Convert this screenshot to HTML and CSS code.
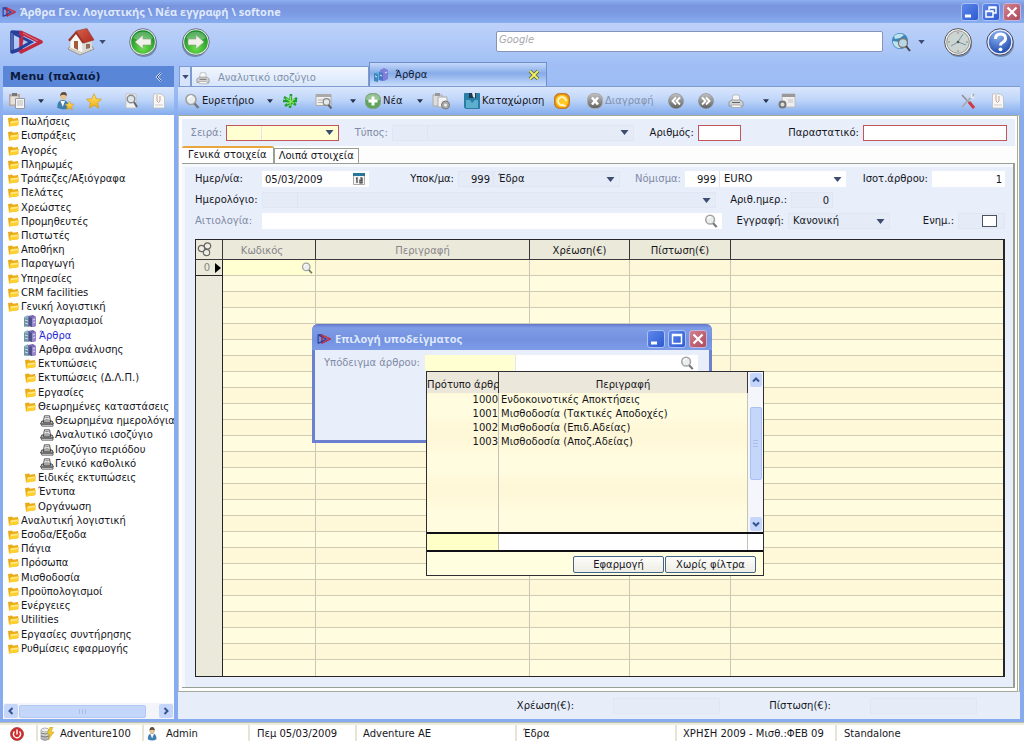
FILE: index.html
```html
<!DOCTYPE html>
<html lang="el">
<head>
<meta charset="utf-8">
<title>Άρθρα Γεν. Λογιστικής</title>
<link rel="stylesheet" href="styles.css">
</head>
<body>
<svg class="defs" aria-hidden="true">
  <defs>
    <linearGradient id="gold" x1="0" y1="0" x2="0" y2="1"><stop offset="0" stop-color="#ffe873"/><stop offset="1" stop-color="#f2ab12"/></linearGradient>
    <linearGradient id="silver" x1="0" y1="0" x2="0" y2="1"><stop offset="0" stop-color="#fafafa"/><stop offset="1" stop-color="#a5a8aa"/></linearGradient>
    <linearGradient id="dark" x1="0" y1="0" x2="0" y2="1"><stop offset="0" stop-color="#c2c2c2"/><stop offset="1" stop-color="#606060"/></linearGradient>
    <linearGradient id="roof" x1="0" y1="0" x2="1" y2="1"><stop offset="0" stop-color="#d9614c"/><stop offset="1" stop-color="#ad2a1e"/></linearGradient>
    <radialGradient id="green" cx=".5" cy=".75" r=".7"><stop offset="0" stop-color="#6fe04c"/><stop offset="1" stop-color="#128a24"/></radialGradient>
    <radialGradient id="blue" cx=".4" cy=".2" r=".9"><stop offset="0" stop-color="#8fb4f2"/><stop offset="1" stop-color="#1742a8"/></radialGradient>
  </defs>
  <symbol id="logo" viewBox="0 0 34 24"><path d="M12 2.500L3 2v20l9-3" fill="none" stroke="#26409c" stroke-width="3.600" stroke-linejoin="round"/><path d="M12 2.500v19.500L32 12z" fill="none" stroke="#c2283e" stroke-width="3.600" stroke-linejoin="round"/><path d="M4 3l18 9-12 7" fill="none" stroke="#26409c" stroke-width="3"/><path d="M13 12V3l16 8" fill="none" stroke="#c2283e" stroke-width="2.600"/><path d="M3 3v17M14 3l15 8" stroke="#fff" stroke-opacity=".4" fill="none"/></symbol>
  <symbol id="home" viewBox="0 0 28 28"><path d="M1 21l12 6 14-6-2-3H3z" fill="#d9d6cf" stroke="#8d8577" stroke-width=".8"/><path d="M3 12l6-7 7 9v11L3 20z" fill="#f7f7f5" stroke="#b9b4ac" stroke-width=".6"/><path d="M16 13h9v8l-9 4z" fill="#d9d9d6"/><path d="M9 3L20 .500l7 11.500-10 3z" fill="url(#roof)" stroke="#8c2c22" stroke-width=".5"/><path d="M9 3L1 12l2 1.500L9 6l6.500 9.500 2-.5z" fill="#9c3328"/><path d="M7 13h4v9l-4-2z" fill="#a65a3c"/><path d="M19 16h4v4l-4 1z" fill="#8f6d58"/></symbol>
  <symbol id="back" viewBox="0 0 30 30"><circle cx="16" cy="17" r="13" fill="#345" opacity=".45"/><circle cx="15" cy="15" r="13.3" fill="#e8f0e8" stroke="#557" stroke-width=".8"/><circle cx="15" cy="15" r="11.800" fill="url(#green)"/><path d="M5 11a11 11 0 0120 0q-10 6-20 0" fill="#fff" opacity=".28"/><path d="M7 15l8-7v4h8v6h-8v4z" fill="#f1f1ec" stroke="#8b9d85" stroke-width=".6"/></symbol>
  <symbol id="clock" viewBox="0 0 30 30"><circle cx="16" cy="17" r="13" fill="#345" opacity=".45"/><circle cx="15" cy="15" r="13.4" fill="#f5f5f5" stroke="#555"/><circle cx="15" cy="15" r="11.300" fill="#cdd5d2" stroke="#999"/><path d="M15 15l5-8M15 15l8 3M15 15l-7 4" stroke="#6f97a5" stroke-width="1"/><circle cx="15" cy="15" r="1.300" fill="#555"/><path d="M15 5v2M15 23v2M5 15h2M23 15h2" stroke="#888"/></symbol>
  <symbol id="help" viewBox="0 0 30 30"><circle cx="16" cy="17" r="13" fill="#345" opacity=".45"/><circle cx="15" cy="15" r="13.2" fill="#eaf0fb" stroke="#446"/><circle cx="15" cy="15" r="11.2" fill="url(#blue)"/><path d="M10.500 12q0-5 5-5t5 4.500q0 2.500-3 4-2 1-2 3" fill="none" stroke="#fff" stroke-width="3"/><circle cx="15.500" cy="22.300" r="1.900" fill="#fff"/></symbol>
  <symbol id="globe" viewBox="0 0 20 20"><circle cx="9" cy="9" r="8" fill="#3c87b8"/><path d="M3 4q5-4 10-1L9 6 4 7zM2 9l6 1 2 6q-6 1-8-5" fill="#bfe3ee"/><circle cx="12" cy="11" r="4.500" fill="#dbe9ee" fill-opacity=".8" stroke="#777" stroke-width="1.300"/><path d="M15 14l4 5" stroke="#444" stroke-width="2"/></symbol>
  <symbol id="search" viewBox="0 0 16 16"><circle cx="7" cy="6.500" r="5" fill="#e9edee" stroke="#a3a3a3" stroke-width="1.700"/><path d="M4 6q1-3 4-3" stroke="#fff" fill="none" stroke-width="1.500"/><path d="M10.500 10.500l4 4.500" stroke="#777" stroke-width="2.400"/></symbol>
  <symbol id="paste" viewBox="0 0 18 18"><path d="M1 2h11v12H1z" fill="#b8a79c"/><path d="M4 1h5v3H4z" fill="#777"/><path d="M2.500 4.500h8v8h-8z" fill="#e6e1dd"/><path d="M7.500 6.500h9v10h-9z" fill="#f6f6f6" stroke="#999"/><path d="M9 9h6M9 11h6M9 13h6" stroke="#b9b9b9"/></symbol>
  <symbol id="person" viewBox="0 0 16 16"><path d="M2 14q0-7 5-7t5 7q-5 3-10 0" fill="#3e7fb0"/><path d="M5 8l2 5 2-5z" fill="#fff"/><circle cx="7" cy="4.500" r="3" fill="#e3c49c"/><path d="M4 4q0-4 3-4t3 4q-3-2-6 0" fill="#5e4a38"/></symbol>
  <symbol id="personstar" viewBox="0 0 16 16"><path d="M1 14q0-7 5-7t6 7q-5 3-11 0" fill="#3e7fb0"/><path d="M4 8l2 5 2-5z" fill="#fff"/><circle cx="6.500" cy="4" r="3" fill="#e3c49c"/><path d="M3.500 3.500Q4 0 7 0t2.500 3.500q-3-2-6 0" fill="#5e4a38"/><path d="M12 8l1.200 2.600 2.800.3-2 2 .5 2.800-2.500-1.300-2.500 1.300.5-2.800-2-2 2.800-.3z" fill="url(#gold)" stroke="#c9962a" stroke-width=".5"/></symbol>
  <symbol id="star" viewBox="0 0 16 16"><path d="M8 .8l2.200 4.900 5.300.6-4 3.500 1.200 5.300L8 12.300l-4.700 2.800 1.200-5.300-4-3.500 5.300-.6z" fill="url(#gold)" stroke="#d29a19" stroke-width=".7"/></symbol>
  <symbol id="sparkle" viewBox="0 0 16 16"><path d="M9 1L8 15M2 4l12 8M15 5L3 13M1 8h14" stroke="#1f9f2d" stroke-width="2.600"/><path d="M8.800 3L8 13M4 5.500l8 5M13 6l-8 5" stroke="#8fe85f" stroke-width="1.200"/></symbol>
  <symbol id="docsearch" viewBox="0 0 16 16"><path d="M3 1h10v14H3z" fill="#f3f3f3" stroke="#bbb" stroke-width=".8"/><circle cx="8" cy="6" r="3.800" fill="#dfe6ea" stroke="#8c8c8c" stroke-width="1.400"/><path d="M11 9l3 5" stroke="#666" stroke-width="2"/></symbol>
  <symbol id="clip" viewBox="0 0 16 16"><path d="M2.500 1h8l3 3v11h-11z" fill="#f8f8f6" stroke="#bbb" stroke-width=".8"/><path d="M6 2v6q1.500 3 3 0V3" fill="none" stroke="#c9a097"/><path d="M4 12h8" stroke="#ccc"/></symbol>
  <symbol id="listfind" viewBox="0 0 18 16"><path d="M1 1.500h15v11H1z" fill="#eee" stroke="#aaa"/><path d="M1 2h15v2H1z" fill="#aaa"/><path d="M3 7h7M3 9.500h5" stroke="#b5b5b5"/><circle cx="11.500" cy="9" r="3.300" fill="#e5e9ea" stroke="#888" stroke-width="1.200"/><path d="M13.500 12l3 3.500" stroke="#666" stroke-width="2"/></symbol>
  <symbol id="add" viewBox="0 0 16 16"><rect x=".5" y=".5" width="15" height="15" rx="6" fill="#5fa45c" stroke="#86a184"/><path d="M1 7q0-6 7-6t7 6z" fill="#fff" opacity=".35"/><path d="M8 3.500v9M3.500 8h9" stroke="#fff" stroke-width="3"/></symbol>
  <symbol id="copy" viewBox="0 0 18 18"><path d="M1 3h9v11H1z" fill="#ddd" stroke="#aaa"/><path d="M3 1h5v3H3z" fill="#999"/><path d="M6 5h9v10H6z" fill="#f4f4f4" stroke="#aaa"/><circle cx="13.500" cy="13" r="4" fill="#aaa" stroke="#777"/><circle cx="13.500" cy="13" r="1.500" fill="#eee"/></symbol>
  <symbol id="save" viewBox="0 0 16 16"><path d="M.5.500h15v15H1.500l-1-1z" fill="#287fa8" stroke="#2d7ba3"/><path d="M5 0h7v5H5z" fill="#1a3a52"/><path d="M8 0h3v5L9 4z" fill="#e5e5e5"/><path d="M2 7h12v8H2z" fill="#5eaed0"/><path d="M6 7l2 3 3-3z" fill="#287fa8"/></symbol>
  <symbol id="refresh" viewBox="0 0 16 16"><rect x=".5" y=".5" width="15" height="15" rx="5" fill="#ee8d12" stroke="#b57b32"/><circle cx="8" cy="8" r="6.300" fill="#ffc928"/><path d="M12 8a4 4 0 10-2 3.500M8 12l4 1" fill="none" stroke="#fff6c8" stroke-width="1.800"/></symbol>
  <symbol id="delete" viewBox="0 0 16 16"><rect x=".5" y=".5" width="15" height="15" rx="6" fill="url(#dark)" stroke="#aaa"/><path d="M5 4.500l6 7M11 4.500l-6 7" stroke="#fff" stroke-width="2.600"/></symbol>
  <symbol id="prev" viewBox="0 0 16 16"><circle cx="8" cy="8" r="7.500" fill="url(#dark)" stroke="#888" stroke-width=".6"/><path d="M8 4.500L4.500 8 8 11.500M12 4.500L8.500 8l3.500 3.500" fill="none" stroke="#fff" stroke-width="1.900"/></symbol>
  <symbol id="printer" viewBox="0 0 16 16"><path d="M5 2h6l1 6H4z" fill="#f8f8f8" stroke="#aaa" stroke-width=".7"/><path d="M1 9l3-2h8l3 2v4H1z" fill="#d5d5d5" stroke="#8a8a8a" stroke-width=".8"/><path d="M4 9.500h8" stroke="#666"/><path d="M3 12h9l2 2.500H4z" fill="#f8f8f8" stroke="#999" stroke-width=".7"/></symbol>
  <symbol id="printerdark" viewBox="0 0 16 14"><path d="M5 1h6l1 6H4z" fill="#fff" stroke="#333"/><path d="M6 3h4M6 5h4" stroke="#777"/><path d="M4 7H2L.5 10.500h15L14 7h-2v2H4z" fill="#bbb" stroke="#333"/><path d="M1 11h14v2H2z" fill="#e8e8e8" stroke="#555"/></symbol>
  <symbol id="settings" viewBox="0 0 18 16"><path d="M4 1h13v13H4z" fill="#efefef" stroke="#bbb"/><path d="M4 1h13v3H4z" fill="#999"/><path d="M10 7h5M10 9h5" stroke="#c5c5c5"/><circle cx="4.500" cy="11.500" r="3" fill="#ddd" stroke="#777" stroke-width="2"/></symbol>
  <symbol id="tools" viewBox="0 0 16 16"><path d="M2 2l12 13" stroke="#909090" stroke-width="1.500"/><path d="M9 9l5 6" stroke="#d13a45" stroke-width="3"/><path d="M14 1L2 14" stroke="#a9a9a9" stroke-width="1.800"/><path d="M12 1l-1 3 3 1" fill="none" stroke="#eee" stroke-width="1.500"/></symbol>
  <symbol id="folder" viewBox="0 0 11 10"><path d="M0 1l4-.500 1 1.200 5-.700.500 7-9.500 1.500z" fill="#e9aa1b"/><path d="M1 9.500L2.500 4 11 3 9.500 8.500z" fill="#ffcf2e"/><path d="M3 4.500l7-.8-.5 1.500-7 1z" fill="#ffe988"/></symbol>
  <symbol id="books" viewBox="0 0 14 14"><path d="M1 3l4-2v11l-4 1z" fill="#8bb6bd"/><path d="M1 4l5 1v8l-5-1z" fill="#6a94a6"/><path d="M5 2l5-1 3 2v9l-3 1-5-1z" fill="#7866b4"/><path d="M6 3l3 1v9l-3-1z" fill="#4a5488"/><path d="M9 4l4-1v9l-4 1z" fill="#9a86cb"/><path d="M2 6l3 1M2 9l3 1M10 6l2-1M10 9l2-1" stroke="#d3e1ec"/></symbol>
  <symbol id="bluebooks" viewBox="0 0 14 14"><path d="M0 5l6-2v9l-6 1z" fill="#5fb4dc"/><path d="M0 5l4 1v8l-4-1z" fill="#3d87bd"/><path d="M6 2l4-2 4 2v9l-4 2-4-1z" fill="#7d7fd8"/><path d="M5 4l4 1v8l-4-1z" fill="#4b76c4"/><path d="M1 8l2 1M6 7l2 1M11 5l2-1" stroke="#e6f1fb"/></symbol>
  <symbol id="calendar" viewBox="0 0 12 12"><path d="M.5.500h11v11H.5z" fill="#f4f4f4" stroke="#aaa"/><path d="M0 0h12v3H0z" fill="#28779b"/><path d="M3 5.500l1-.5v5M7 5h2v2H7v3h2V7" fill="none" stroke="#333" stroke-width="1.200"/></symbol>
  <symbol id="power" viewBox="0 0 14 14"><circle cx="7" cy="7" r="6.500" fill="#d12c2c" stroke="#9c3333" stroke-width=".7"/><path d="M4.500 4.500a3.600 3.600 0 105 0M7 2.500v5" stroke="#fff" stroke-width="1.400" fill="none"/></symbol>
  <symbol id="database" viewBox="0 0 14 14"><path d="M1 3v9q4 3 8 0V3z" fill="url(#silver)" stroke="#888" stroke-width=".6"/><ellipse cx="5" cy="3" rx="4" ry="2" fill="#eee" stroke="#888" stroke-width=".6"/><path d="M1 6q4 2 8 0M1 9q4 2 8 0" stroke="#777" fill="none"/><path d="M10 0L7 7h3l-2 6 6-8h-3l2-5z" fill="#f5cb23" stroke="#bb9420" stroke-width=".5"/></symbol>
  <symbol id="rings" viewBox="0 0 15 15"><g fill="#efede2" stroke="#666" stroke-width="1.200"><circle cx="4.500" cy="6.500" r="3.200"/><circle cx="10.500" cy="4" r="3.200"/><circle cx="9.500" cy="10.500" r="3.200"/></g></symbol>
  <symbol id="closex" viewBox="0 0 12 12"><path d="M2 2l8 8M10 2l-8 8" stroke="#5f6a32" stroke-width="3.600"/><path d="M2 2l8 8M10 2l-8 8" stroke="#f2f266" stroke-width="1.800"/></symbol>
  <symbol id="min" viewBox="0 0 16 16"><path d="M3 12h6" stroke="#fff" stroke-width="3"/></symbol>
  <symbol id="restore" viewBox="0 0 16 16"><path d="M6 6V3h7v6h-3M3 7h7v6H3zM3 7.500h7M6 4h7" fill="none" stroke="#fff" stroke-width="1.500"/></symbol>
  <symbol id="max" viewBox="0 0 16 16"><path d="M3.500 3.500h9v9h-9zM3 4.500h10" fill="none" stroke="#fff" stroke-width="1.500"/></symbol>
  <symbol id="close" viewBox="0 0 16 16"><path d="M3.500 3.500l9 9M12.500 3.500l-9 9" stroke="#fff" stroke-width="2.200"/></symbol>
  <symbol id="down" viewBox="0 0 8 5"><path d="M0 0h8L4 5z" fill="currentColor"/></symbol>
  <symbol id="chev" viewBox="0 0 10 10"><path d="M2 6.500L5 3.500l3 3" fill="none" stroke="#33558f" stroke-width="2"/></symbol>
</svg>

<div class="app">
  <header class="titlebar">
    <svg class="logo-small"><use href="#logo"/></svg>
    <h1 class="title">Άρθρα Γεν. Λογιστικής \ Νέα εγγραφή \ softone</h1>
    <button class="winbtn" aria-label="Ελαχιστοποίηση"><svg><use href="#min"/></svg></button>
    <button class="winbtn" aria-label="Επαναφορά"><svg><use href="#restore"/></svg></button>
    <button class="winbtn winbtn-close" aria-label="Κλείσιμο"><svg><use href="#close"/></svg></button>
  </header>

  <div class="navbar">
    <svg class="logo-large"><use href="#logo"/></svg>
    <button class="nav-btn nav-home" aria-label="Αρχική"><svg><use href="#home"/></svg><svg class="caret"><use href="#down"/></svg></button>
    <button class="nav-btn nav-back" aria-label="Πίσω"><svg><use href="#back"/></svg></button>
    <button class="nav-btn nav-next" aria-label="Εμπρός"><svg class="flip"><use href="#back"/></svg></button>
    <input class="google" type="search" placeholder="Google" aria-label="Google">
    <button class="nav-btn nav-globe" aria-label="Αναζήτηση"><svg class="globe"><use href="#globe"/></svg><svg class="caret"><use href="#down"/></svg></button>
    <button class="nav-btn nav-clock" aria-label="Ρολόι"><svg><use href="#clock"/></svg></button>
    <button class="nav-btn nav-help" aria-label="Βοήθεια"><svg><use href="#help"/></svg></button>
  </div>

  <div class="body">
    <aside class="sidebar">
      <h2 class="side-head">Menu (παλαιό)<button class="collapse" aria-label="Σύμπτυξη"><svg><path d="M7 1L3 5l4 4" fill="none" stroke="#dce7fb" stroke-width="2"/><path d="M7 1L3 5l4 4" fill="none" stroke="#2d4f94" stroke-width="1"/></svg></button></h2>
      <div class="bar side-bar">
        <button class="tool drop-s" aria-label="Επικόλληση"><svg class="i18"><use href="#paste"/></svg><svg class="caret push"><use href="#down"/></svg></button>
        <button class="tool" aria-label="Χρήστης"><svg class="i18"><use href="#personstar"/></svg></button>
        <button class="tool" aria-label="Αγαπημένα"><svg class="i16"><use href="#star"/></svg></button>
        <button class="tool push" aria-label="Εύρεση"><svg class="i16"><use href="#docsearch"/></svg></button>
        <button class="tool" aria-label="Συνημμένα"><svg class="i16"><use href="#clip"/></svg></button>
      </div>
      <ul class="tree" id="tree"></ul>
      <div class="hscroll">
        <button class="sbtn" aria-label="Αριστερά"><svg class="left"><use href="#chev"/></svg></button>
        <span class="hthumb"></span>
        <button class="sbtn" aria-label="Δεξιά"><svg class="right"><use href="#chev"/></svg></button>
      </div>
    </aside>

    <main class="main">
      <nav class="tabs">
        <button class="tab-menu" aria-label="Καρτέλες"><svg class="caret"><use href="#down"/></svg></button>
        <button class="tab"><svg class="i14"><use href="#printer"/></svg>Αναλυτικό ισοζύγιο</button>
        <button class="tab tab-active"><svg class="i14"><use href="#bluebooks"/></svg>Άρθρα<svg class="i12 push"><use href="#closex"/></svg></button>
      </nav>
      <div class="bar main-bar">
        <button class="tool drop-xl"><svg class="i16"><use href="#search"/></svg>Ευρετήριο<svg class="caret push"><use href="#down"/></svg></button>
        <button class="tool gap-s" aria-label="Νέο"><svg class="i16"><use href="#sparkle"/></svg></button>
        <button class="tool drop-m gap-l" aria-label="Λίστα"><svg class="i18"><use href="#listfind"/></svg><svg class="caret push"><use href="#down"/></svg></button>
        <button class="tool drop-l gap-s"><svg class="i16"><use href="#add"/></svg>Νέα<svg class="caret push"><use href="#down"/></svg></button>
        <button class="tool gap-s" aria-label="Αντιγραφή"><svg class="i18"><use href="#copy"/></svg></button>
        <button class="tool wide gap-m"><svg class="i16"><use href="#save"/></svg>Καταχώριση</button>
        <button class="tool gap-s" aria-label="Ανανέωση"><svg class="i16"><use href="#refresh"/></svg></button>
        <button class="tool wide gap-l off"><svg class="i16"><use href="#delete"/></svg>Διαγραφή</button>
        <button class="tool" aria-label="Προηγούμενο"><svg class="i16"><use href="#prev"/></svg></button>
        <button class="tool gap-m" aria-label="Επόμενο"><svg class="i16 flip"><use href="#prev"/></svg></button>
        <button class="tool drop-m gap-m" aria-label="Εκτύπωση"><svg class="i16"><use href="#printer"/></svg><svg class="caret push"><use href="#down"/></svg></button>
        <button class="tool gap-s" aria-label="Ρυθμίσεις"><svg class="i18"><use href="#settings"/></svg></button>
        <button class="tool push" aria-label="Εργαλεία"><svg class="i16"><use href="#tools"/></svg></button>
        <button class="tool gap-m" aria-label="Συνημμένα"><svg class="i16"><use href="#clip"/></svg></button>
      </div>

      <section class="work">
        <div class="frame">
          <div class="filters">
            <label class="dim" for="seira">Σειρά:</label>
            <span class="field req yellow"><input class="code" aria-label="Κωδικός σειράς"><select id="seira"><option></option></select><svg class="caret"><use href="#down"/></svg></span>
            <label class="dim" for="typos">Τύπος:</label>
            <span class="field flat"><input class="code" aria-label="Κωδικός τύπου"><select id="typos"><option></option></select><svg class="caret"><use href="#down"/></svg></span>
            <label for="arithmos">Αριθμός:</label>
            <span class="field req"><input id="arithmos"></span>
            <label for="parast">Παραστατικό:</label>
            <span class="field req"><input id="parast"></span>
          </div>
          <div class="subtabs">
            <button class="subtab subtab-on">Γενικά στοιχεία</button>
            <button class="subtab">Λοιπά στοιχεία</button>
          </div>
          <div class="panel">
            <div class="form row-a">
              <label class="start" for="date">Ημερ/νία:</label>
              <span class="field"><input id="date" value="05/03/2009"><svg class="i12"><use href="#calendar"/></svg></span>
              <label for="branch">Υποκ/μα:</label>
              <span class="field flat"><input class="code num" value="999" aria-label="Κωδικός υποκαταστήματος"><select id="branch"><option>Έδρα</option></select><svg class="caret"><use href="#down"/></svg></span>
              <label class="dim" for="curr">Νόμισμα:</label>
              <span class="field"><input class="code num" value="999" aria-label="Κωδικός νομίσματος"><select id="curr"><option>EURO</option></select><svg class="caret"><use href="#down"/></svg></span>
              <label for="rate">Ισοτ.άρθρου:</label>
              <span class="field"><input id="rate" class="num" value="1"></span>
            </div>
            <div class="form row-b">
              <label class="start" for="journal">Ημερολόγιο:</label>
              <span class="field flat"><input class="code" aria-label="Κωδικός ημερολογίου"><select id="journal"><option></option></select><svg class="caret"><use href="#down"/></svg></span>
              <label for="jnum">Αριθ.ημερ.:</label>
              <span class="field flat"><input id="jnum" class="num" value="0"></span>
            </div>
            <div class="form row-c">
              <label class="start dim" for="reason">Αιτιολογία:</label>
              <span class="field"><input id="reason"><svg class="i14"><use href="#search"/></svg></span>
              <label for="entry">Εγγραφή:</label>
              <span class="field flat"><select id="entry"><option>Κανονική</option></select><svg class="caret"><use href="#down"/></svg></span>
              <label for="upd">Ενημ.:</label>
              <span class="field flat checkfield"><input id="upd" type="checkbox"></span>
            </div>
            <table class="grid">
              <colgroup><col class="g0"><col class="g1"><col class="g2"><col class="g3"><col class="g4"><col></colgroup>
              <thead><tr><th><svg class="rings"><use href="#rings"/></svg></th><th class="dimh code-h">Κωδικός</th><th class="dimh">Περιγραφή</th><th>Χρέωση(€)</th><th>Πίστωση(€)</th><th></th></tr></thead>
              <tbody id="rows"></tbody>
            </table>
          </div>
        </div>
        <div class="totals">
          <label for="debit">Χρέωση(€):</label><span class="field flat"><input id="debit"></span>
          <label for="credit">Πίστωση(€):</label><span class="field flat"><input id="credit"></span>
        </div>
      </section>
    </main>
  </div>

  <footer class="status">
    <span class="cell s-power"><svg class="i14"><use href="#power"/></svg></span>
    <span class="cell s-icon"><svg class="i14"><use href="#database"/></svg>Adventure100</span>
    <span class="cell s-icon"><svg class="i14"><use href="#person"/></svg>Admin</span>
    <span class="cell s-date">Πεμ 05/03/2009</span>
    <span class="cell s-wide">Adventure AE</span>
    <span class="cell s-wide">Έδρα</span>
    <span class="cell s-wide">ΧΡΗΣΗ 2009 - Μισθ.:ΦΕΒ 09</span>
    <span class="cell s-last">Standalone</span>
  </footer>

  <section class="dialog" role="dialog" aria-labelledby="dlg">
    <header class="dlg-head">
      <svg class="logo-small"><use href="#logo"/></svg>
      <h2 class="title" id="dlg">Επιλογή υποδείγματος</h2>
      <button class="winbtn" aria-label="Ελαχιστοποίηση"><svg><use href="#min"/></svg></button>
      <button class="winbtn" aria-label="Μεγιστοποίηση"><svg><use href="#max"/></svg></button>
      <button class="winbtn winbtn-close" aria-label="Κλείσιμο"><svg><use href="#close"/></svg></button>
    </header>
    <div class="dlg-body">
      <label class="dim" for="tpl">Υπόδειγμα άρθρου:</label>
      <span class="field"><input class="tplcode" id="tpl"><input aria-label="Περιγραφή υποδείγματος"><svg class="i14"><use href="#search"/></svg></span>
    </div>
  </section>

  <section class="popup">
    <div class="pop-top">
      <table class="list">
        <colgroup><col class="p0"><col></colgroup>
        <thead><tr><th>Πρότυπο άρθρ</th><th>Περιγραφή</th></tr></thead>
        <tbody>
          <tr><td>1000</td><td>Ενδοκοινοτικές Αποκτήσεις</td></tr>
          <tr><td>1001</td><td>Μισθοδοσία (Τακτικές Αποδοχές)</td></tr>
          <tr><td>1002</td><td>Μισθοδοσία (Επιδ.Αδείας)</td></tr>
          <tr><td>1003</td><td>Μισθοδοσία (Αποζ.Αδείας)</td></tr>
          <tr class="rest"><td></td><td></td></tr>
        </tbody>
      </table>
      <div class="vscroll">
        <button class="sbtn" aria-label="Πάνω"><svg><use href="#chev"/></svg></button>
        <span class="vthumb"></span>
        <button class="sbtn" aria-label="Κάτω"><svg class="flipv"><use href="#chev"/></svg></button>
      </div>
    </div>
    <div class="pop-filter"><input class="pf0" aria-label="Φίλτρο κωδικού"><input class="pf1" aria-label="Φίλτρο περιγραφής"></div>
    <div class="pop-foot"><button class="xp">Εφαρμογή</button><button class="xp">Χωρίς φίλτρα</button></div>
  </section>
</div>
<script src="app.js"></script>
</body>
</html>
```
FILE: styles.css
```css
* { box-sizing: border-box; }
body { margin: 0; font: 10px/14px "DejaVu Sans", Verdana, sans-serif; color: #16161c; background: #7ba2ea; }
button, input, select { font: inherit; color: inherit; margin: 0; padding: 0; border: 0; background: none; border-radius: 0; appearance: none; min-width: 0; outline: 0; }
h1, h2, ul { margin: 0; padding: 0; }
svg { display: block; flex: none; }
.defs { position: absolute; width: 0; height: 0; }
.app { position: relative; display: flex; flex-direction: column; min-height: 100vh; }
.push { margin-left: auto; }
.flip { transform: scaleX(-1); }
.flipv { transform: scaleY(-1); }
.i12 { width: 12px; height: 12px; }
.i14 { width: 14px; height: 14px; }
.i16 { width: 16px; height: 16px; }
.i18 { width: 18px; height: 18px; }
.caret { width: 7px; height: 4px; color: #3d4c70; }

.titlebar { display: flex; align-items: center; gap: 2px; height: 23px; padding: 0 3px 0 2px; background: linear-gradient(#8db0f2, #7894dd 25%, #7c9be4 60%, #88adf0); }
.title { flex: 1; padding-left: 2px; font: bold 11px/16px "Open Sans", "Noto Sans", sans-serif; color: #dfe9fb; white-space: nowrap; }
.logo-small { width: 14px; height: 10px; }
.winbtn { width: 18px; height: 18px; border: 1px solid #a9c1f4; border-radius: 3px; background: linear-gradient(135deg, #5e88ea, #2e5ad2); margin-left: 1px; }
.winbtn svg { width: 16px; height: 16px; }
.winbtn-close { background: linear-gradient(135deg, #cf8290, #ae4a5c); border-color: #c9b3d9; }

.navbar { display: flex; align-items: center; height: 39px; padding: 0 9px 2px; background: linear-gradient(#bdd2f9, #a3c1f6); }
.logo-large { width: 34px; height: 24px; }
.nav-btn { display: flex; align-items: center; gap: 4px; }
.nav-btn svg:first-child { width: 30px; height: 30px; }
.nav-home { margin-left: 24px; width: 42px; }
.nav-home svg:first-child { width: 28px; height: 28px; }
.nav-back { margin-left: 19px; }
.nav-next { margin-left: 23px; }
.google { flex: 1; height: 21px; margin-left: 285px; padding: 0 0 4px 2px; border: 1px solid #8495b8; border-radius: 2px; background: #fff; font-style: italic; }
.google::placeholder { color: #a9a9ad; opacity: 1; }
.nav-globe { margin-left: 8px; gap: 7px; }
.nav-btn .globe:first-child { width: 20px; height: 20px; }
.nav-clock { margin-left: 18px; }
.nav-help { margin-left: 12px; }

.body { flex: 1; display: flex; gap: 4px; padding: 0 4px 3px 3px; background: linear-gradient(#a1bff6, #9dbcf5 24px, #86abef 60px); }
.sidebar { width: 171px; flex: none; margin-top: 4px; display: flex; flex-direction: column; background: #fff; }
.side-head { display: flex; align-items: center; height: 21px; padding: 0 8px 0 7px; background: #5a86d7; font-size: 11px; font-weight: bold; color: #0b1a3e; }
.collapse { margin-left: auto; }
.collapse svg { width: 12px; height: 10px; }
.bar { display: flex; align-items: center; height: 28px; background: linear-gradient(#dae6fc, #c0d6f9 45%, #98bbf2 80%, #86abea); }
.side-bar { padding: 0 7px 0 5px; gap: 12px; }
.tool { display: flex; align-items: center; gap: 2px; white-space: nowrap; }
.drop-s { width: 36px; }
.drop-m { width: 41px; }
.drop-l { width: 58px; }
.drop-xl { width: 89px; }
.wide { width: 81px; }
.gap-s { margin-left: 9px; }
.gap-m { margin-left: 14px; }
.gap-l { margin-left: 17px; }
.off { color: #8391ac; }
.tool .caret { width: 6px; color: #27334f; }
.tree { flex: 1; display: grid; grid-auto-rows: 1fr; padding-bottom: 47px; list-style: none; overflow: hidden; }
.tree li { display: flex; align-items: center; gap: 2px; min-height: 14px; padding-left: 5px; white-space: nowrap; }
.tree .lv1 { padding-left: 22px; }
.tree .lv2 { padding-left: 37px; gap: 1px; }
.tree a { color: inherit; text-decoration: none; }
.tree .current a { color: #2a2ad8; }
.ic-folder { width: 11px; height: 10px; }
.ic-books { width: 14px; height: 14px; }
.ic-printerdark { width: 14px; height: 12px; }
.lv1 .ic-books { margin-left: -2px; }
.hscroll { display: flex; align-items: center; height: 16px; padding: 0 1px; background: #f4f5fa; }
.sbtn { display: grid; place-items: center; width: 14px; height: 14px; border-radius: 2px; background: #c6d6fb; flex: none; }
.sbtn svg { width: 10px; height: 10px; }
.left { transform: rotate(-90deg); }
.right { transform: rotate(90deg); }
.hthumb { flex: 1; height: 13px; margin: 0 13px 0 1px; border: 1px solid #b3c8f2; border-radius: 2px; background: repeating-linear-gradient(90deg, #a9bdea 0 1px, transparent 1px 3px) center / 7px 5px no-repeat #c5d6fb; }

.main { flex: 1; display: flex; flex-direction: column; min-width: 0; }
.tabs { display: flex; align-items: flex-end; height: 25px; border-bottom: 1px solid #7d9dd2; padding-left: 1px; }
.tab-menu { display: grid; place-items: center; width: 12px; height: 20px; background: #d7e4fb; border: 1px solid #7c9ccf; border-bottom: 0; }
.tab { display: flex; align-items: center; gap: 8px; width: 178px; height: 20px; padding: 2px 6px 0 4px; border: 1px solid #7c9ccf; border-bottom: 0; color: #8090aa; background: linear-gradient(#f1f6fe, #d8e6fb); }
.tab-active { height: 24px; gap: 7px; color: #111a33; padding: 0 6px 0 4px; background: linear-gradient(#c5d8fa, #86ace9 45%, #c8dcfb); border-color: #6e8fc9; }
.main-bar { padding: 0 14px 0 6px; }
.work { flex: 1; display: flex; flex-direction: column; background: #e7eefa; }
.frame { flex: 1; display: flex; flex-direction: column; border: 1px solid #a3aa9a; border-left-color: #bcc6c9; border-right: 3px double #a9ad9e; padding: 3px 2px 3px 3px; background: #fdfdfe; }
.filters { display: grid; grid-template-columns: 44px 113px 53px 242px 64px 43px 122px 1fr; align-items: center; height: 27px; padding-right: 8px; background: #e8eefa; }
.filters label, .form label, .totals label { text-align: right; padding-right: 4px; white-space: nowrap; }
.form .start { text-align: left; padding: 0; }
.dim { color: #7f8aa5; }
.field { display: flex; align-items: center; height: 16px; background: #fff; min-width: 0; }
.field input { flex: 1; height: 100%; padding: 0 3px; width: 0; }
.field select { flex: 1; height: 100%; padding-left: 4px; opacity: 1; }
.field .code { flex: 0 0 35px; border-right: 1px solid #dfe5ef; }
.field .num { text-align: right; }
.field .caret { width: 9px; height: 5px; margin-right: 4px; }
.field .i12, .field .i14 { margin-right: 4px; }
.flat { background: #e5ecf7; border: 1px solid #e0e7f3; }
.req { border: 1px solid #c1555c; }
.req.yellow { background: #ffffd2; }
.subtabs { display: flex; align-items: flex-end; height: 17px; }
.subtab { height: 15px; padding: 0 4px; border: 1px solid #98a095; border-bottom: 0; background: #fff; white-space: nowrap; }
.subtab-on { align-self: stretch; height: 17px; padding: 0 6px 2px; border: 0; border-top: 2px solid #e9a63e; border-right: 1px solid #98a095; border-radius: 2px 2px 0 0; }
.panel { flex: 1; border: 1px solid #98a095; border-left: 0; border-right-width: 2px; padding: 7px 8px 10px 13px; background: #e8eefa; box-shadow: inset 4px 4px 0 -1px #f6f8fd; }
.form { display: grid; align-items: center; height: 16px; margin-bottom: 5px; }
.row-a { grid-template-columns: 67px 107px 89px 162px 65px 161px 86px 1fr; }
.row-b { grid-template-columns: 67px 1fr 75px 42px; padding-right: 172px; }
.row-c { grid-template-columns: 67px 1fr 66px 102px 68px 47px; }
.checkfield { justify-content: flex-end; padding-right: 7px; }
.field input[type=checkbox] { flex: none; width: 15px; height: 12px; border: 1px solid #4b525e; background: #fff; }

.grid { width: 100%; margin-top: 10px; border-collapse: separate; border-spacing: 0; table-layout: fixed; border: 1px solid #26262a; border-right-width: 2px; background: #fffbdd; }
.g0 { width: 27px; } .g1 { width: 93px; } .g2 { width: 214px; } .g3 { width: 100px; } .g4 { width: 101px; }
.grid th { height: 20px; padding: 3px 0 0; font-weight: normal; background: #ebe9d9; border-right: 1px solid #38383c; border-bottom: 1px solid #38383c; line-height: 14px; }
.grid th:first-child { padding: 0; }
.grid .code-h { padding-right: 14px; }
.grid th:last-child { border-right: 0; }
.grid .dimh { color: #85858a; }
.rings { width: 15px; height: 15px; margin-left: 1px; }
.grid td { height: 16px; padding: 0; line-height: 14px; border-right: 1px solid #c9c8b8; border-bottom: 1px solid #cfccb6; }
.grid tr:nth-child(odd) td { background: #fff8d8; }
.grid tr:nth-child(even) td { background: #fffce0; }
.grid tbody td:first-child { background: #ebe9d9; border-right-color: #26262a; border-bottom: 0; }
.grid td:last-child { border-right: 0; }
.grid tr:last-child td { border-bottom: 0; }
.grid tbody tr:first-child td:first-child { border-bottom: 1px solid #26262a; }
.grid tbody tr:first-child td:nth-child(2) { background: #ffffd2; }
.marker { display: flex; align-items: center; justify-content: flex-end; gap: 5px; color: #85858a; padding-right: 1px; }
.marker svg { width: 6px; height: 10px; }
.lookup svg { margin-left: auto; margin-right: 2px; }
.totals { display: grid; grid-template-columns: 400px 142px 115px 142px; align-items: center; height: 27px; }
.totals .flat { margin-left: 35px; }

.status { display: flex; height: 20px; background: #ecebdc; padding: 2px 0 0; border-top: 1px solid #b8bdb5; }
.cell { display: flex; align-items: center; background: #fff; border-right: 2px solid #e6e4d3; padding-left: 7px; white-space: nowrap; }
.s-power { width: 38px; padding-left: 10px; }
.s-icon { width: 106px; padding-left: 2px; gap: 6px; }
.s-date { width: 107px; }
.s-wide { width: 160px; padding-left: 6px; }
.s-last { flex: 1; border: 0; }

.dialog { position: absolute; left: 312px; top: 324px; width: 400px; height: 119px; border: 3px solid #6b80cf; border-top: 0; border-radius: 6px 6px 0 0; background: #e8eefa; }
.dlg-head { display: flex; align-items: center; gap: 2px; height: 26px; margin: 0 -3px; padding: 3px 5px 0; border-radius: 6px 6px 0 0; background: linear-gradient(#6177cc, #7f9ce6 15%, #7391df 60%, #7c9ce8); }
.dlg-body { display: flex; align-items: center; gap: 4px; padding: 5px 11px 0 9px; white-space: nowrap; }
.dlg-body .field { flex: 1; margin-left: 1px; }
.field .tplcode { flex: 0 0 90px; background: #ffffd2; }
.field .tplcode + input { border-left: 1px solid #e4e8ee; }
.popup { position: absolute; left: 426px; top: 371px; width: 338px; border: 1px solid #2e2e34; background: #fff; }
.pop-top { display: flex; height: 160px; }
.list { flex: 1; table-layout: fixed; border-spacing: 0; width: 0; background: repeating-linear-gradient(#fff8d8 0 14px, #fffce0 28px 42px, #fff8d8 56px); }
.p0 { width: 72px; }
.list th { height: 21px; padding: 4px 0 0; font-weight: normal; white-space: nowrap; background: #ebe7da; border-right: 1px solid #38383c; line-height: 14px; overflow: hidden; }
.list td { height: 14px; padding: 0 0 0 2px; white-space: nowrap; border-right: 1px solid #c5c3b8; line-height: 14px; }
.list td:first-child { text-align: right; padding: 0; }
.list .rest td { height: auto; }
.vscroll { display: flex; flex-direction: column; width: 15px; padding: 1px 1px; background: #f5f6fb; align-items: center; }
.vscroll .sbtn { width: 12px; }
.vthumb { flex: 1; width: 12px; margin: 20px 0 37px; border: 1px solid #a9c0f2; border-radius: 2px; background: repeating-linear-gradient(#a9bdea 0 1px, transparent 1px 3px) center / 5px 7px no-repeat #c5d6fb; }
.pop-filter { display: flex; height: 20px; border: solid #101014; border-width: 2px 0; padding-right: 15px; }
.pf0 { width: 72px; background: #ffffc8; border-right: 1px solid #c5c3b8; }
.pf1 { flex: 1; border-right: 1px solid #c5c3b8; }
.pop-foot { display: flex; justify-content: flex-end; align-items: center; gap: 1px; height: 23px; padding: 2px 7px 0 0; background: #ffffe0; }
.xp { width: 91px; height: 17px; border: 1px solid #44648c; border-radius: 2px; background: linear-gradient(#fdfdfb, #eeede4); }
```
FILE: app.js
```js
const items = [
  [0, 'folder', 'Πωλήσεις'], [0, 'folder', 'Εισπράξεις'], [0, 'folder', 'Αγορές'], [0, 'folder', 'Πληρωμές'],
  [0, 'folder', 'Τράπεζες/Αξιόγραφα'], [0, 'folder', 'Πελάτες'], [0, 'folder', 'Χρεώστες'], [0, 'folder', 'Προμηθευτές'],
  [0, 'folder', 'Πιστωτές'], [0, 'folder', 'Αποθήκη'], [0, 'folder', 'Παραγωγή'], [0, 'folder', 'Υπηρεσίες'],
  [0, 'folder', 'CRM facilities'], [0, 'folder', 'Γενική λογιστική'],
  [1, 'books', 'Λογαριασμοί'], [1, 'books', 'Άρθρα', true], [1, 'books', 'Αρθρα ανάλυσης'],
  [1, 'folder', 'Εκτυπώσεις'], [1, 'folder', 'Εκτυπώσεις (Δ.Λ.Π.)'], [1, 'folder', 'Εργασίες'], [1, 'folder', 'Θεωρημένες καταστάσεις'],
  [2, 'printerdark', 'Θεωρημένα ημερολόγια'], [2, 'printerdark', 'Αναλυτικό ισοζύγιο'], [2, 'printerdark', 'Ισοζύγιο περιόδου'], [2, 'printerdark', 'Γενικό καθολικό'],
  [1, 'folder', 'Ειδικές εκτυπώσεις'], [1, 'folder', 'Έντυπα'], [1, 'folder', 'Οργάνωση'],
  [0, 'folder', 'Αναλυτική λογιστική'], [0, 'folder', 'Εσοδα/Εξοδα'], [0, 'folder', 'Πάγια'], [0, 'folder', 'Πρόσωπα'],
  [0, 'folder', 'Μισθοδοσία'], [0, 'folder', 'Προϋπολογισμοί'], [0, 'folder', 'Ενέργειες'], [0, 'folder', 'Utilities'],
  [0, 'folder', 'Εργασίες συντήρησης'], [0, 'folder', 'Ρυθμίσεις εφαρμογής']
];
document.getElementById('tree').innerHTML = items.map(([level, icon, text, current]) =>
  `<li class="lv${level}${current ? ' current' : ''}"><svg class="ic-${icon}"><use href="#${icon}"/></svg><a href="#">${text}</a></li>`).join('');

const blank = '<td></td>'.repeat(6);
const first = '<td><div class="marker">0<svg><path d="M0 0l6 5-6 5z"/></svg></div></td>' +
  '<td class="lookup"><svg class="i12"><use href="#search"/></svg></td>' + '<td></td>'.repeat(4);
document.getElementById('rows').innerHTML = Array.from({ length: 26 }, (_, i) => `<tr>${i ? blank : first}</tr>`).join('');
```
